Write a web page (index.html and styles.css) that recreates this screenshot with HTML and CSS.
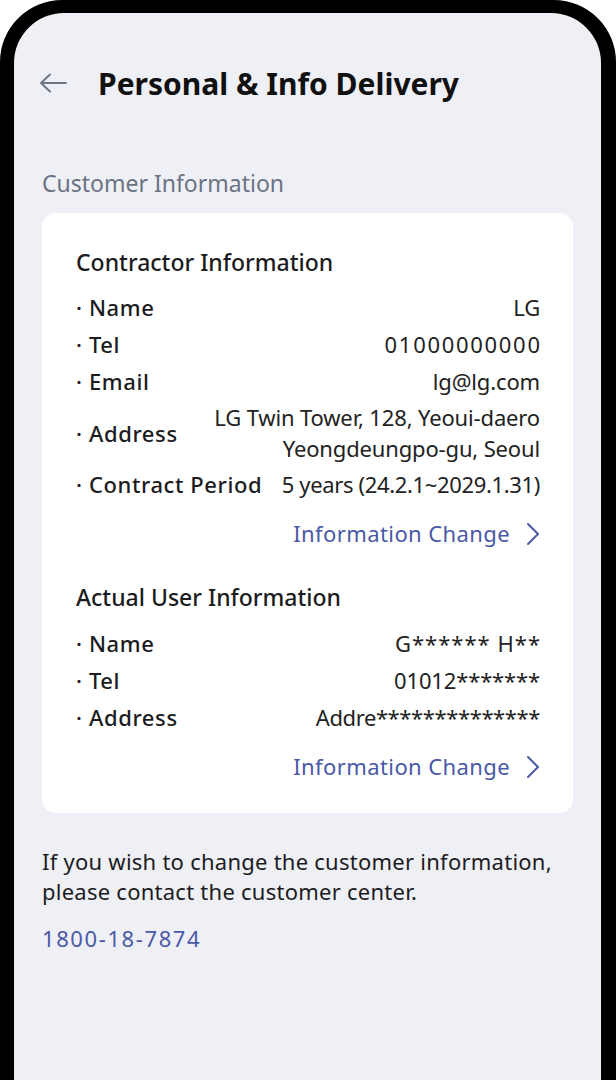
FILE: index.html
```html
<!DOCTYPE html>
<html>
<head>
<meta charset="utf-8">
<link rel="stylesheet" href="styles.css">
</head>
<body>
<div class="phone">
  <div class="screen">
    <header class="header">
      <svg class="back" width="28" height="20" viewBox="0 0 28 20"><path d="M27 10H2M11 1.5L2 10l9 8.5" fill="none" stroke="#6f7888" stroke-width="2" stroke-linecap="round" stroke-linejoin="round"/></svg>
      <h1 class="title">Personal &amp; Info Delivery</h1>
    </header>
    <div class="section-label">Customer Information</div>
    <div class="card">
      <div class="group-title">Contractor Information</div>
      <div class="row"><span class="label">· Name</span><span class="value">LG</span></div>
      <div class="row"><span class="label">· Tel</span><span class="value num">01000000000</span></div>
      <div class="row"><span class="label">· Email</span><span class="value">lg@lg.com</span></div>
      <div class="row row-multi"><span class="label">· Address</span><span class="value">LG Twin Tower, 128, Yeoui-daero<br>Yeongdeungpo-gu, Seoul</span></div>
      <div class="row"><span class="label">· Contract Period</span><span class="value tight">5 years (24.2.1~2029.1.31)</span></div>
      <div class="link-row"><a class="link">Information Change<svg class="chev" width="14" height="24" viewBox="0 0 14 24"><path d="M2 2l10 10-10 10" fill="none" stroke="#4a59a6" stroke-width="2" stroke-linecap="round" stroke-linejoin="round"/></svg></a></div>

      <div class="group-title second">Actual User Information</div>
      <div class="row"><span class="label">· Name</span><span class="value wide">G****** H**</span></div>
      <div class="row"><span class="label">· Tel</span><span class="value">01012*******</span></div>
      <div class="row"><span class="label">· Address</span><span class="value narrow">Addre**************</span></div>
      <div class="link-row"><a class="link">Information Change<svg class="chev" width="14" height="24" viewBox="0 0 14 24"><path d="M2 2l10 10-10 10" fill="none" stroke="#4a59a6" stroke-width="2" stroke-linecap="round" stroke-linejoin="round"/></svg></a></div>
    </div>
    <p class="notice">If you wish to change the customer information,<br>please contact the customer center.</p>
    <div class="phone-number">1800-18-7874</div>
  </div>
</div>
</body>
</html>
```
FILE: styles.css
```css
html, body {
  margin: 0;
  padding: 0;
  background: #ffffff;
  height: 1080px;
  overflow: hidden;
}
body {
  font-family: "Noto Sans", "Open Sans", sans-serif;
  color: #1c1c1e;
}
.phone {
  background: #000;
  border-radius: 62px 62px 0 0;
  padding: 13px 15px 0 14px;
  height: 1067px;
}
.screen {
  background: #eff0f5;
  border-radius: 50px 50px 0 0;
  height: 100%;
  padding: 42px 28px 0 28px;
  box-sizing: border-box;
}
.header {
  display: flex;
  align-items: center;
  height: 56px;
}
.back {
  margin-left: -3px;
  width: 28px;
  height: 20px;
  flex: none;
}
.title {
  margin: 0 0 0 31px;
  font-size: 30px;
  font-weight: 700;
  letter-spacing: 0;
  color: #111;
}
.section-label {
  margin-top: 57px;
  line-height: 30px;
  font-size: 23px;
  color: #6b7284;
}
.card {
  margin-top: 15px;
  background: #fff;
  border-radius: 14px;
  padding: 34px 33px 28px 34px;
}
.group-title {
  line-height: 30px;
  font-size: 23px;
  font-weight: 500;
  margin-bottom: 12px;
}
.group-title.second {
  margin-top: 30px;
  margin-bottom: 13px;
}
.row {
  display: flex;
  justify-content: space-between;
  align-items: center;
  line-height: 37px;
  font-size: 22px;
}
.row-multi {
  line-height: 31px;
  padding: 2px 0;
}
.label {
  font-weight: 500;
  white-space: nowrap;
  letter-spacing: 0.6px;
}
.value {
  text-align: right;
  color: #222;
  letter-spacing: -0.15px;
}
.value.tight {
  letter-spacing: -0.35px;
}
.value.num {
  letter-spacing: 1.7px;
  margin-right: -1.7px;
}
.value.wide {
  letter-spacing: 1px;
  margin-right: -1px;
}
.value.narrow {
  letter-spacing: -0.4px;
}
.link-row {
  display: flex;
  justify-content: flex-end;
  margin-top: 12px;
  line-height: 37px;
}
.link {
  display: flex;
  align-items: center;
  gap: 16px;
  font-size: 22px;
  color: #4a59a6;
  letter-spacing: 0.4px;
}
.chev {
  flex: none;
}
.notice {
  margin: 33px 0 0 0;
  font-size: 22px;
  line-height: 30px;
  letter-spacing: 0.25px;
  color: #1c1c1e;
}
.phone-number {
  margin-top: 17px;
  font-size: 22px;
  line-height: 30px;
  color: #4a59a6;
  letter-spacing: 1.6px;
}
```
